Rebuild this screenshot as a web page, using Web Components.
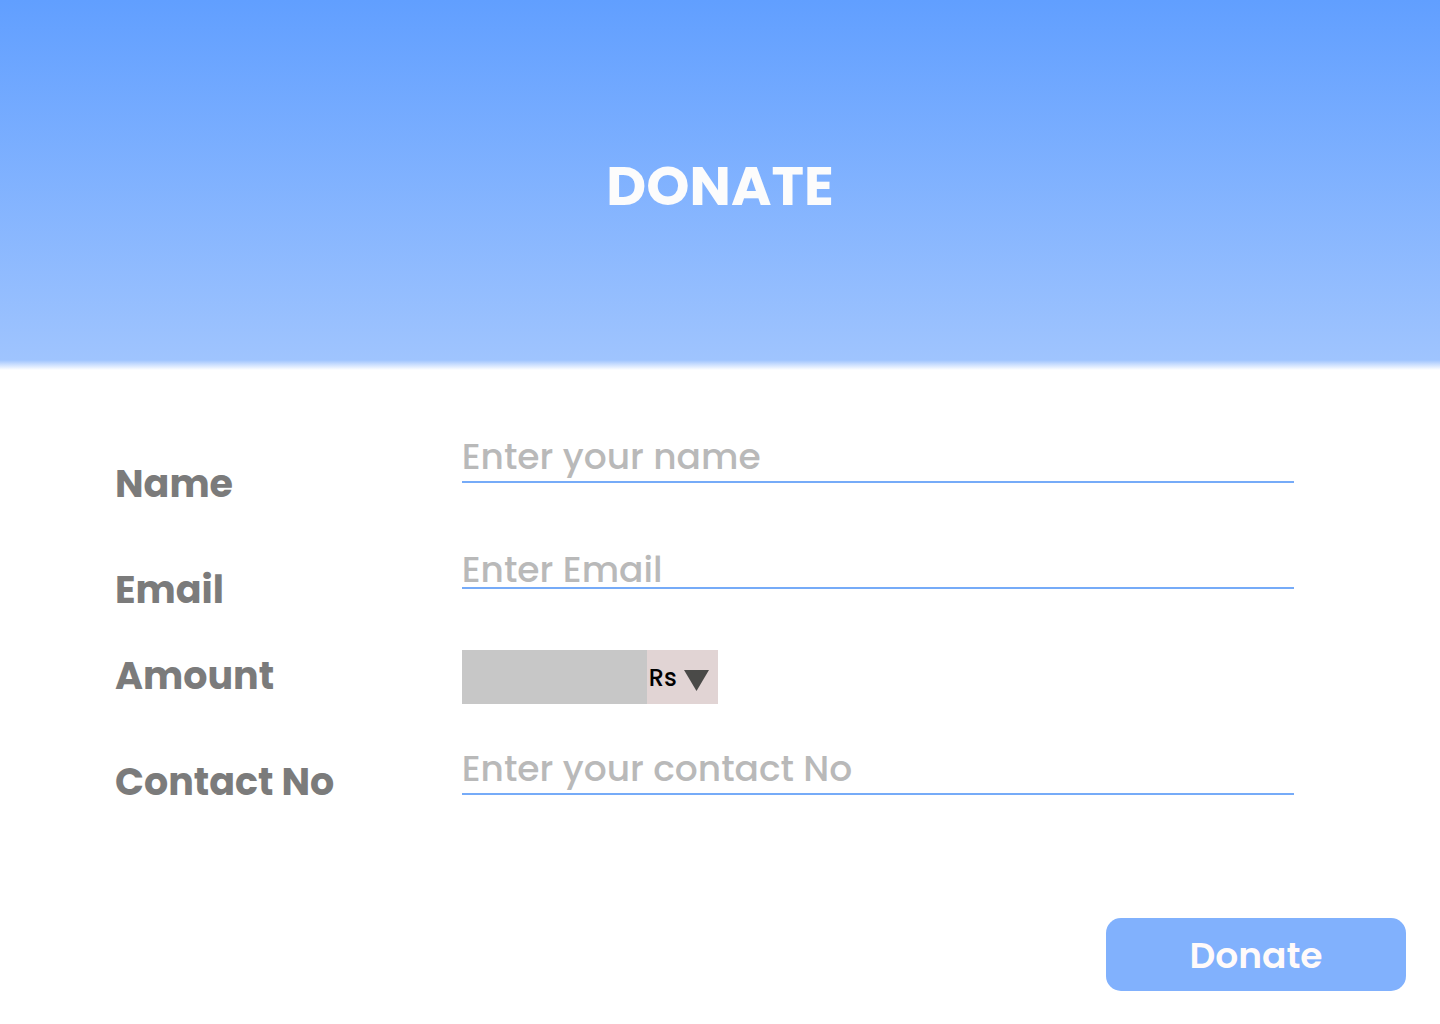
<!DOCTYPE html>
<html lang="en">
<head>
<meta charset="utf-8">
<meta name="viewport" content="width=device-width, initial-scale=1">
<title>Donate</title>
<style>
  body { margin: 0; background: #fff; font-family: Poppins, Inter, "Open Sans", sans-serif; }
</style>
</head>
<body>
<donate-page></donate-page>
<script>
  class BaseElement extends HTMLElement {
    constructor() {
      super();
      this.attachShadow({ mode: "open" });
    }
    connectedCallback() {
      this.shadowRoot.innerHTML = this.render();
    }
  }

  // Grid and label rules shared by every row of the form
  const rowStyles = `
    :host { display: grid; grid-template-columns: 5fr 12fr; align-items: start; }
    * { box-sizing: border-box; }
    label { font-size: 38px; line-height: 50px; font-weight: 700; color: #7b7b7b; white-space: nowrap; }
  `;

  class PageBanner extends BaseElement {
    render() {
      return `
        <style>
          :host {
            display: flex; justify-content: center; padding: 150px 24px 148px;
            background: linear-gradient(#619fff 0, #9fc4fe calc(100% - 10px), #fff 100%);
          }
          h1 { margin: 0; font-size: 55px; line-height: 72px; font-weight: 700; color: #fcfcfc; }
        </style>
        <h1><slot></slot></h1>`;
    }
  }

  class TextField extends BaseElement {
    render() {
      const a = (name) => this.getAttribute(name) || "";
      return `
        <style>
          ${rowStyles}
          :host([drop]) label { padding-top: 26px; }
          :host(:not([drop])) label { padding-top: 12px; }
          input {
            width: 100%; height: 50px; margin: 0; padding: 0 0 2px; border: 0; outline: 0;
            border-bottom: 2px solid #76abf8; border-radius: 0; background: none;
            font: 500 36px/46px Poppins, Inter, sans-serif; color: #444;
          }
          :host([low]) input { padding: 12px 0 0; }
          input::placeholder { color: #b9b9b9; opacity: 1; }
        </style>
        <label for="field">${a("label")}</label>
        <input id="field" type="${a("type")}" placeholder="${a("placeholder")}">`;
    }
  }

  class AmountField extends BaseElement {
    render() {
      return `
        <style>
          ${rowStyles}
          label { padding-top: 1px; }
          .amount { display: flex; height: 54px; }
          input { width: 185px; border: 0; margin: 0; padding: 0 12px; background: #c7c7c7; font: 400 24px Poppins, Inter, sans-serif; border-radius: 0; }
          .currency { display: grid; width: 71px; align-items: center; background: #e1d4d4; }
          select, svg { grid-area: 1 / 1; }
          select {
            appearance: none; width: 100%; height: 54px; margin: 0; padding: 0 0 0 2px; border: 0;
            border-radius: 0; background: none; color: #000; font: 500 24px Poppins, Inter, sans-serif;
          }
          svg { justify-self: end; margin: 6px 9px 0 0; pointer-events: none; }
        </style>
        <label for="amount">Amount</label>
        <div class="amount">
          <input id="amount" type="text" inputmode="decimal">
          <div class="currency">
            <select aria-label="Currency"><option>Rs</option></select>
            <svg width="25" height="21" viewBox="0 0 25 21" aria-hidden="true"><path d="M0 0H25L12.5 21Z" fill="#4a4a48"/></svg>
          </div>
        </div>`;
    }
  }

  class DonateButton extends BaseElement {
    render() {
      return `
        <style>
          :host { display: block; }
          button {
            width: 300px; height: 73px; padding: 2px 0 0; border: 0; border-radius: 15px; cursor: pointer;
            background: #81b1fd; color: #fffafa; font: 600 36px/48px Poppins, Inter, sans-serif;
          }
        </style>
        <button type="submit"><slot></slot></button>`;
    }
  }

  class DonatePage extends BaseElement {
    render() {
      return `
        <style>
          :host { display: block; }
          form { display: flex; flex-direction: column; padding: 63px 34px 33px 115px; }
          .fields { display: flex; flex-direction: column; gap: 30px; padding-right: 112px; }
          amount-field { margin-top: 5px; }
          .fields text-field:last-child { margin-top: 11px; }
          donate-button { align-self: flex-end; margin-top: 111px; }
        </style>
        <page-banner>DONATE</page-banner>
        <form>
          <div class="fields">
            <text-field drop label="Name" type="text" placeholder="Enter your name"></text-field>
            <text-field drop low label="Email" type="email" placeholder="Enter Email"></text-field>
            <amount-field></amount-field>
            <text-field label="Contact No" type="tel" placeholder="Enter your contact No"></text-field>
          </div>
          <donate-button>Donate</donate-button>
        </form>`;
    }
  }

  customElements.define("page-banner", PageBanner);
  customElements.define("text-field", TextField);
  customElements.define("amount-field", AmountField);
  customElements.define("donate-button", DonateButton);
  customElements.define("donate-page", DonatePage);
</script>
</body>
</html>
